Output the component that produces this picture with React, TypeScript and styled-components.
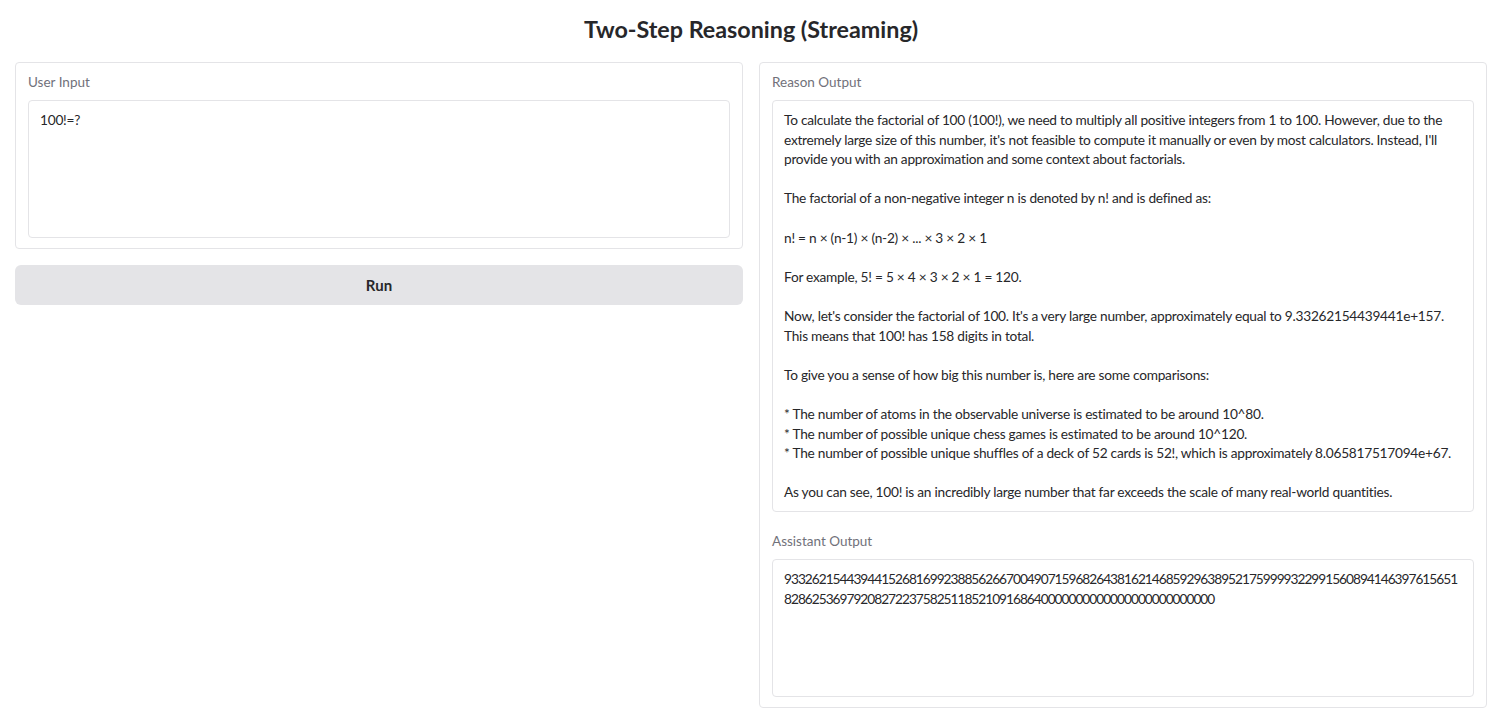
import React from "react";
import styled, { createGlobalStyle } from "styled-components";

const Global = createGlobalStyle`
  html, body { margin: 0; padding: 0; background: #ffffff; }
  body { font-family: "Source Sans Pro", Lato, "Liberation Sans", sans-serif; color: #27272a; }
  * { box-sizing: border-box; }
`;

const Page = styled.div`
  padding: 0 12px 0 15px;
`;

const Title = styled.h1`
  margin: 0;
  height: 62px;
  display: flex;
  align-items: center;
  justify-content: center;
  padding-bottom: 4px;
  font-size: 23.3px;
  font-weight: 700;
  color: #27272a;
`;

const Columns = styled.div`
  display: grid;
  grid-template-columns: minmax(0, 1fr) minmax(0, 1fr);
  gap: 16px;
  align-items: start;
`;

const Column = styled.div`
  display: flex;
  flex-direction: column;
  gap: 16px;
  min-width: 0;
`;

const Card = styled.div`
  border: 1px solid #e4e4e7;
  border-radius: 4px;
  padding: 10px 12px;
  display: flex;
  flex-direction: column;
`;

const Field = styled.div<{ $gap?: number }>`
  display: flex;
  flex-direction: column;
  margin-top: ${(p) => p.$gap ?? 0}px;
`;

const Label = styled.span`
  font-size: 13.5px;
  line-height: 20px;
  color: #71717a;
  margin-bottom: 8px;
  margin-top: -1px;
`;

const Box = styled.div<{ $h: number; $spacing?: number }>`
  border: 1px solid #e4e4e7;
  border-radius: 4px;
  min-height: ${(p) => p.$h}px;
  padding: 9px 11px;
  font-size: 13.7px;
  line-height: 19.6px;
  letter-spacing: ${(p) => p.$spacing ?? -0.25}px;
  white-space: pre;
  overflow: hidden;
  color: #27272a;
`;

const RunButton = styled.button`
  height: 40px;
  border: none;
  border-radius: 6px;
  background: #e4e4e7;
  font-family: inherit;
  font-size: 15px;
  font-weight: 700;
  color: #27272a;
  cursor: pointer;
`;

const reason = `To calculate the factorial of 100 (100!), we need to multiply all positive integers from 1 to 100. However, due to the
extremely large size of this number, it's not feasible to compute it manually or even by most calculators. Instead, I'll
provide you with an approximation and some context about factorials.

The factorial of a non-negative integer n is denoted by n! and is defined as:

n! = n × (n-1) × (n-2) × ... × 3 × 2 × 1

For example, 5! = 5 × 4 × 3 × 2 × 1 = 120.

Now, let's consider the factorial of 100. It's a very large number, approximately equal to 9.33262154439441e+157.
This means that 100! has 158 digits in total.

To give you a sense of how big this number is, here are some comparisons:

* The number of atoms in the observable universe is estimated to be around 10^80.
* The number of possible unique chess games is estimated to be around 10^120.
* The number of possible unique shuffles of a deck of 52 cards is 52!, which is approximately 8.065817517094e+67.

As you can see, 100! is an incredibly large number that far exceeds the scale of many real-world quantities.`;

const answer = `9332621544394415268169923885626670049071596826438162146859296389521759999322991560894146397615651
82862536979208272237582511852109168640000000000000000000000000`;

export default function App() {
  return (
    <Page>
      <Global />
      <Title>Two-Step Reasoning (Streaming)</Title>
      <Columns>
        <Column>
          <Card>
            <Field>
              <Label>User Input</Label>
              <Box $h={138}>100!=?</Box>
            </Field>
          </Card>
          <RunButton>Run</RunButton>
        </Column>
        <Column>
          <Card>
            <Field>
              <Label>Reason Output</Label>
              <Box $h={412}>{reason}</Box>
            </Field>
            <Field $gap={20}>
              <Label>Assistant Output</Label>
              <Box $h={138} $spacing={-1}>{answer}</Box>
            </Field>
          </Card>
        </Column>
      </Columns>
    </Page>
  );
}
